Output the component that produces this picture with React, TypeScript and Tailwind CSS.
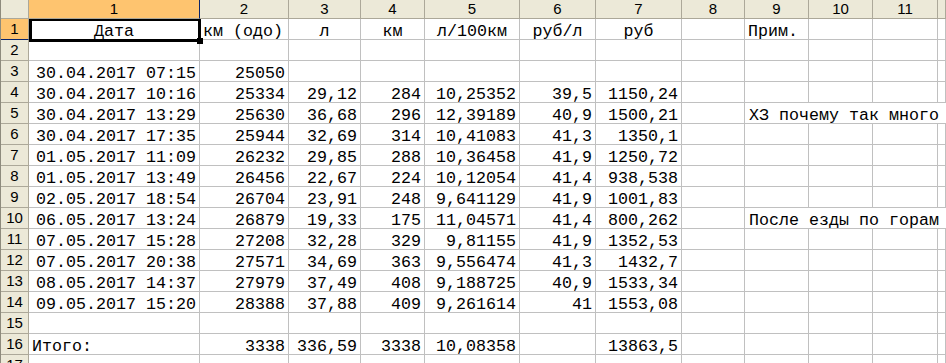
import React from 'react'

type Row = {
  cells: string[]
  note?: string
  left?: boolean
}

const colHeaders = ['1', '2', '3', '4', '5', '6', '7', '8', '9', '10', '11', '']

const rows: Row[] = [
  { cells: [] },
  { cells: [] },
  { cells: ['30.04.2017 07:15', '25050'] },
  { cells: ['30.04.2017 10:16', '25334', '29,12', '284', '10,25352', '39,5', '1150,24'] },
  { cells: ['30.04.2017 13:29', '25630', '36,68', '296', '12,39189', '40,9', '1500,21'], note: 'ХЗ почему так много' },
  { cells: ['30.04.2017 17:35', '25944', '32,69', '314', '10,41083', '41,3', '1350,1'] },
  { cells: ['01.05.2017 11:09', '26232', '29,85', '288', '10,36458', '41,9', '1250,72'] },
  { cells: ['01.05.2017 13:49', '26456', '22,67', '224', '10,12054', '41,4', '938,538'] },
  { cells: ['02.05.2017 18:54', '26704', '23,91', '248', '9,641129', '41,9', '1001,83'] },
  { cells: ['06.05.2017 13:24', '26879', '19,33', '175', '11,04571', '41,4', '800,262'], note: 'После езды по горам' },
  { cells: ['07.05.2017 15:28', '27208', '32,28', '329', '9,81155', '41,9', '1352,53'] },
  { cells: ['07.05.2017 20:38', '27571', '34,69', '363', '9,556474', '41,3', '1432,7'] },
  { cells: ['08.05.2017 14:37', '27979', '37,49', '408', '9,188725', '40,9', '1533,34'] },
  { cells: ['09.05.2017 15:20', '28388', '37,88', '409', '9,261614', '41', '1553,08'] },
  { cells: [] },
  { cells: ['Итого:', '3338', '336,59', '3338', '10,08358', '', '13863,5'], left: true },
  { cells: [] },
]

const titles = ['Дата', 'км (одо)', 'л', 'км', 'л/100км', 'руб/л', 'руб', '', 'Прим.', '', '', '']

const mono = "font-['Liberation_Mono','Courier_New',monospace] text-[16.67px] leading-[18px] pt-[4px] whitespace-nowrap overflow-hidden text-black"
const cellBase = 'h-[21px] border-r border-b border-[#c0c0c0] bg-white'
const hdrBase = "flex items-center justify-center bg-[#ece9d8] border-r border-b border-[#aca899] font-['Liberation_Sans',Arial,sans-serif] text-[15px] text-black"

function TitleRow() {
  return (
    <>
      <div className={`${hdrBase} h-[21px] bg-[#fec46f] border-b-[#0a246a]`}>1</div>
      {titles.map((t, i) => {
        if (i === 0) {
          return (
            <div key={i} className={`${cellBase} relative`}>
              <div className={`${mono} text-center`}>{t}</div>
              <div className="absolute left-0 top-0 -right-[2px] -bottom-[3px] border-[3px] border-t-2 border-black z-10" />
              <div className="absolute -right-[4px] -bottom-[5px] w-[6px] h-[6px] bg-black z-20" />
            </div>
          )
        }
        const align = i === 1 || i === 8 ? 'text-left pl-[3px]' : 'text-center'
        return (
          <div key={i} className={cellBase}>
            <div className={`${mono} ${align}`}>{t}</div>
          </div>
        )
      })}
    </>
  )
}

export default function App() {
  return (
    <div className="w-[946px] h-[363px] overflow-hidden bg-white">
      <div className="grid grid-cols-[28px_171px_89px_72px_64px_95px_76px_86px_63px_64px_64px_65px_1fr] border-l border-[#8e8b7d]">
        <div className={`${hdrBase} h-[19px]`} />
        {colHeaders.map((c, i) => (
          <div
            key={i}
            className={`${hdrBase} h-[19px] ${i === 0 ? 'bg-[#fec46f] border-r-[#0a246a]' : ''}`}
          >
            {c}
          </div>
        ))}

        <TitleRow />

        {rows.slice(1).map((r, ri) => {
          const n = ri + 2
          return (
            <React.Fragment key={n}>
              <div className={`${hdrBase} h-[21px]`}>{n}</div>
              {Array.from({ length: 8 }).map((_, ci) => {
                const v = r.cells[ci] ?? ''
                const align = r.left && ci === 0 ? 'text-left pl-[3px]' : 'text-right pr-[3px]'
                return (
                  <div key={ci} className={cellBase}>
                    <div className={`${mono} ${align}`}>{v}</div>
                  </div>
                )
              })}
              {r.note ? (
                <div className="col-span-4 h-[21px] border-b border-[#c0c0c0] bg-white">
                  <div className={`${mono} text-left pl-[4px]`}>{r.note}</div>
                </div>
              ) : (
                <>
                  <div className={cellBase} />
                  <div className={cellBase} />
                  <div className={cellBase} />
                  <div className={cellBase} />
                </>
              )}
            </React.Fragment>
          )
        })}
      </div>
    </div>
  )
}
